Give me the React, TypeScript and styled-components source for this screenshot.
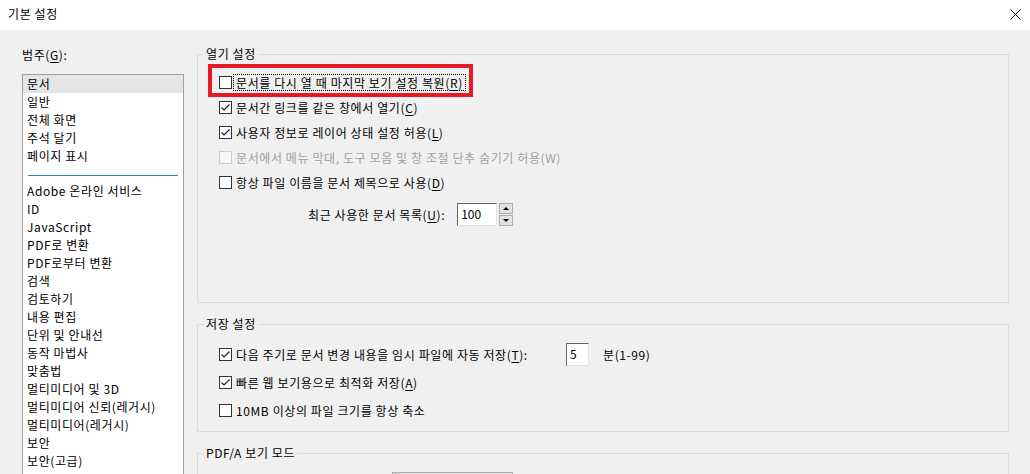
import React from "react";
import styled, { createGlobalStyle } from "styled-components";

const GlobalStyle = createGlobalStyle`
  html, body {
    margin: 0;
    padding: 0;
    background: #f0f0f0;
  }
  body {
    font-family: "Noto Sans CJK KR", "Noto Sans", sans-serif;
    font-size: 12px;
    letter-spacing: 0.6px;
    color: #000;
  }
`;

const Window = styled.div`
  width: 1030px;
  height: 474px;
  overflow: hidden;
  background: #f0f0f0;
  display: flex;
  flex-direction: column;
`;

const TitleBar = styled.div`
  height: 30px;
  flex: none;
  background: #fff;
  display: flex;
  align-items: center;
  justify-content: space-between;
  padding: 0 9px 2px 8px;
  box-sizing: border-box;
  line-height: 16px;
`;

const CloseIcon = styled.svg`
  width: 11px;
  height: 11px;
  display: block;
`;

const Body = styled.div`
  flex: 1;
  display: flex;
  min-height: 0;
`;

const Sidebar = styled.div`
  width: 184px;
  flex: none;
  box-sizing: border-box;
  padding: 17px 0 0 22px;
  display: flex;
  flex-direction: column;
`;

const SideLabel = styled.div`
  line-height: 16px;
  margin-bottom: 11px;
`;

const ListBox = styled.div`
  width: 162px;
  height: 420px;
  box-sizing: border-box;
  border: 1px solid #a0a0a0;
  background: #fff;
  flex: none;
`;

const ListItem = styled.div<{ $selected?: boolean }>`
  height: 18px;
  line-height: 18px;
  padding-left: 4px;
  white-space: nowrap;
  background: ${(p) => (p.$selected ? "#e5e5e5" : "transparent")};
`;

const ListSeparator = styled.div`
  height: 17px;
  display: flex;
  align-items: center;
  padding: 0 5px 0 5px;

  &::after {
    content: "";
    flex: 1;
    height: 1px;
    margin-top: 3px;
    background: #2a86ad;
  }
`;

const Content = styled.div`
  margin-left: 13px;
  width: 812px;
  padding-top: 24px;
  display: flex;
  flex-direction: column;
  gap: 21px;
`;

const GroupBox = styled.div<{ $height: number }>`
  position: relative;
  height: ${(p) => p.$height}px;
  flex: none;
  box-sizing: border-box;
  border: 1px solid #dcdcdc;
`;

const Legend = styled.span`
  position: absolute;
  top: -9px;
  left: 6px;
  padding: 0 2px;
  line-height: 16px;
  background: #f0f0f0;
`;

const GroupInner = styled.div<{ $top: number }>`
  padding-top: ${(p) => p.$top}px;
  display: flex;
  flex-direction: column;
  align-items: flex-start;
`;

const CheckRow = styled.div<{ $highlight?: boolean; $height?: number; $gapTop?: number }>`
  position: relative;
  display: flex;
  align-items: center;
  height: ${(p) => p.$height ?? 25}px;
  margin-top: ${(p) => p.$gapTop ?? 0}px;
  padding-left: 21px;

  ${(p) =>
    p.$highlight &&
    `
    &::after {
      content: "";
      position: absolute;
      left: 10px;
      right: -8px;
      top: -6px;
      bottom: -2px;
      border: 4px solid #e51b23;
      pointer-events: none;
    }
  `}
`;

const Box = styled.span<{ $disabled?: boolean }>`
  width: 13px;
  height: 13px;
  box-sizing: border-box;
  flex: none;
  border: 1px solid ${(p) => (p.$disabled ? "#cccccc" : "#333333")};
  background: ${(p) => (p.$disabled ? "#f7f7f7" : "#fff")};
  display: flex;
  align-items: center;
  justify-content: center;
`;

const Label = styled.span<{ $focus?: boolean; $disabled?: boolean; $width?: number }>`
  margin-left: 2px;
  padding: 0 2px;
  line-height: 15px;
  white-space: nowrap;
  color: ${(p) => (p.$disabled ? "#a0a0a0" : "#000")};
  outline: ${(p) => (p.$focus ? "1px dotted #000" : "none")};
  ${(p) => (p.$width ? `width: ${p.$width}px; box-sizing: border-box;` : "")}
`;

const Key = styled.span`
  text-decoration: underline;
  text-underline-offset: 2px;
`;

const SpinRow = styled.div`
  display: flex;
  align-items: center;
  height: 23px;
  margin-top: 8px;
  padding-left: 110px;
`;

const PlainText = styled.span`
  line-height: 16px;
  white-space: nowrap;
`;

const NumberField = styled.div<{ $width: number; $gap: number }>`
  width: ${(p) => p.$width}px;
  height: 23px;
  margin-left: ${(p) => p.$gap}px;
  box-sizing: border-box;
  border: 1px solid;
  border-color: #646464 #e3e3e3 #e3e3e3 #646464;
  background: #fff;
  padding-left: 3px;
  line-height: 20px;
  letter-spacing: 0;
  flex: none;
`;

const SpinButtons = styled.div`
  margin-left: 2px;
  width: 14px;
  height: 23px;
  display: flex;
  flex-direction: column;
  gap: 1px;
`;

const SpinButton = styled.div<{ $down?: boolean }>`
  flex: 1;
  box-sizing: border-box;
  border: 1px solid #adadad;
  background: #e1e1e1;
  display: flex;
  align-items: center;
  justify-content: center;

  &::before {
    content: "";
    width: 0;
    height: 0;
    border-left: 3px solid transparent;
    border-right: 3px solid transparent;
    ${(p) =>
      p.$down ? "border-top: 3px solid #000;" : "border-bottom: 3px solid #000;"}
  }
`;

const UnitText = styled.span`
  margin-left: 14px;
  line-height: 16px;
  white-space: nowrap;
`;

const Combo = styled.div`
  margin: 18px 0 0 194px;
  width: 121px;
  height: 22px;
  box-sizing: border-box;
  border: 1px solid #adadad;
  background: #dcdcdc;
  display: flex;
  padding: 2px;
`;

const ComboField = styled.div`
  width: 99px;
  background: #e9e9e9;
`;

const Check = ({ checked, disabled }: { checked?: boolean; disabled?: boolean }) => (
  <Box $disabled={disabled}>
    {checked && (
      <svg width="11" height="11" viewBox="0 0 11 11">
        <polyline
          points="1.5,5.5 4,8 9.5,2.5"
          fill="none"
          stroke="#1f1f1f"
          strokeWidth="1.2"
        />
      </svg>
    )}
  </Box>
);

const categories = [
  "문서",
  "일반",
  "전체 화면",
  "주석 달기",
  "페이지 표시",
  "-",
  "Adobe 온라인 서비스",
  "ID",
  "JavaScript",
  "PDF로 변환",
  "PDF로부터 변환",
  "검색",
  "검토하기",
  "내용 편집",
  "단위 및 안내선",
  "동작 마법사",
  "맞춤법",
  "멀티미디어 및 3D",
  "멀티미디어 신뢰(레거시)",
  "멀티미디어(레거시)",
  "보안",
  "보안(고급)",
];

const App: React.FC = () => {
  return (
    <>
      <GlobalStyle />
      <Window>
        <TitleBar>
          <span>기본 설정</span>
          <CloseIcon viewBox="0 0 11 11">
            <path d="M0.5 0.5 L10.5 10.5 M10.5 0.5 L0.5 10.5" stroke="#000" strokeWidth="1" />
          </CloseIcon>
        </TitleBar>
        <Body>
          <Sidebar>
            <SideLabel>
              범주(<Key>G</Key>):
            </SideLabel>
            <ListBox>
              {categories.map((c, i) =>
                c === "-" ? (
                  <ListSeparator key={i} />
                ) : (
                  <ListItem key={i} $selected={i === 0}>
                    {c}
                  </ListItem>
                )
              )}
            </ListBox>
          </Sidebar>
          <Content>
            <GroupBox $height={249}>
              <Legend>열기 설정</Legend>
              <GroupInner $top={15}>
                <CheckRow $highlight>
                  <Check />
                  <Label $focus>
                    문서를 다시 열 때 마지막 보기 설정 복원(<Key>R</Key>)
                  </Label>
                </CheckRow>
                <CheckRow>
                  <Check checked />
                  <Label>
                    문서간 링크를 같은 창에서 열기(<Key>C</Key>)
                  </Label>
                </CheckRow>
                <CheckRow>
                  <Check checked />
                  <Label>
                    사용자 정보로 레이어 상태 설정 허용(<Key>L</Key>)
                  </Label>
                </CheckRow>
                <CheckRow>
                  <Check disabled />
                  <Label $disabled>
                    문서에서 메뉴 막대, 도구 모음 및 창 조절 단추 숨기기 허용(W)
                  </Label>
                </CheckRow>
                <CheckRow>
                  <Check />
                  <Label>
                    항상 파일 이름을 문서 제목으로 사용(<Key>D</Key>)
                  </Label>
                </CheckRow>
                <SpinRow>
                  <PlainText>
                    최근 사용한 문서 목록(<Key>U</Key>):
                  </PlainText>
                  <NumberField $width={40} $gap={12}>100</NumberField>
                  <SpinButtons>
                    <SpinButton />
                    <SpinButton $down />
                  </SpinButtons>
                </SpinRow>
              </GroupInner>
            </GroupBox>

            <GroupBox $height={108}>
              <Legend>저장 설정</Legend>
              <GroupInner $top={18}>
                <CheckRow $height={23}>
                  <Check checked />
                  <Label $width={332}>
                    다음 주기로 문서 변경 내용을 임시 파일에 자동 저장(<Key>T</Key>):
                  </Label>
                  <NumberField $width={23} $gap={0}>5</NumberField>
                  <UnitText>분(1-99)</UnitText>
                </CheckRow>
                <CheckRow $gapTop={4}>
                  <Check checked />
                  <Label>
                    빠른 웹 보기용으로 최적화 저장(<Key>A</Key>)
                  </Label>
                </CheckRow>
                <CheckRow $gapTop={3}>
                  <Check />
                  <Label>10MB 이상의 파일 크기를 항상 축소</Label>
                </CheckRow>
              </GroupInner>
            </GroupBox>

            <GroupBox $height={120}>
              <Legend>PDF/A 보기 모드</Legend>
              <Combo>
                <ComboField />
              </Combo>
            </GroupBox>
          </Content>
        </Body>
      </Window>
    </>
  );
};

export default App;
